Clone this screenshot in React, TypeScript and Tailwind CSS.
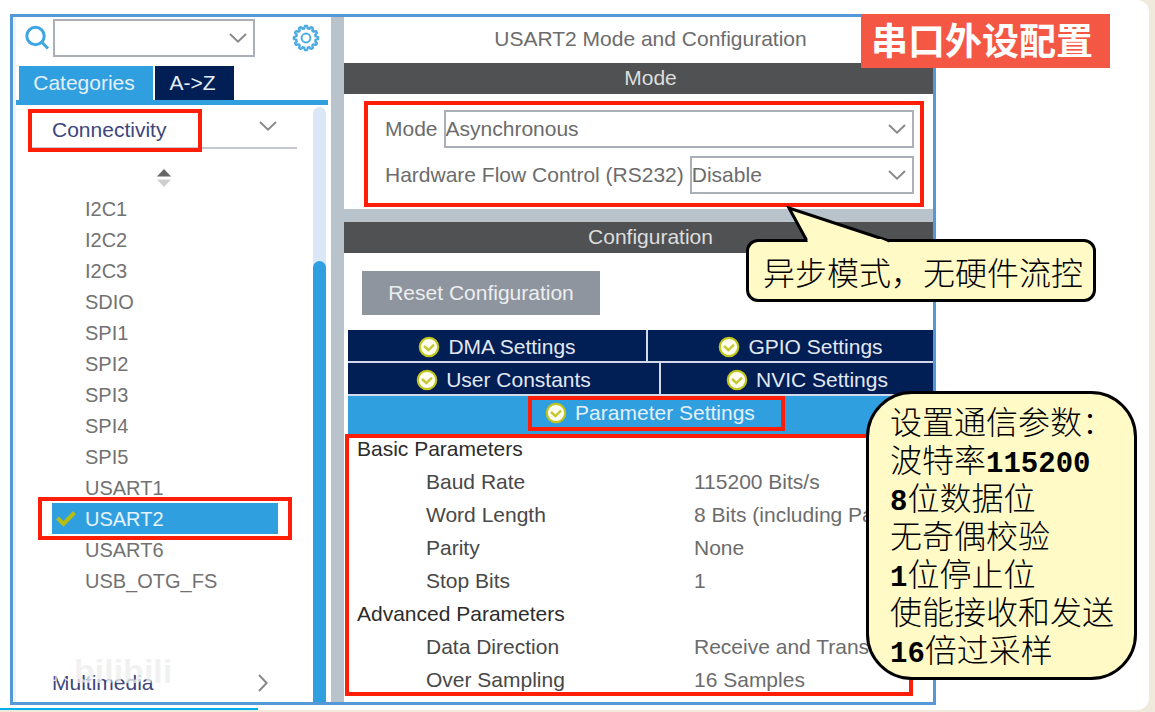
import { Fragment } from "react";

const peripherals = [
  "I2C1", "I2C2", "I2C3", "SDIO", "SPI1", "SPI2", "SPI3", "SPI4", "SPI5",
  "USART1", "USART2", "USART6", "USB_OTG_FS",
];

const groups = [
  {
    name: "Basic Parameters",
    rows: [
      ["Baud Rate", "115200 Bits/s"],
      ["Word Length", "8 Bits (including Parity)"],
      ["Parity", "None"],
      ["Stop Bits", "1"],
    ],
  },
  {
    name: "Advanced Parameters",
    rows: [
      ["Data Direction", "Receive and Transmit"],
      ["Over Sampling", "16 Samples"],
    ],
  },
];

function Chevron({ className }: { className: string }) {
  return (
    <svg viewBox="0 0 18 10" className={className} fill="none" stroke="#8a8a8a" strokeWidth="2" aria-hidden="true">
      <path d="M1 1 L9 8.6 L17 1" />
    </svg>
  );
}

function CheckBadge() {
  return (
    <svg viewBox="0 0 22 22" className="size-[22px] shrink-0" aria-hidden="true">
      <circle cx="11" cy="11" r="9.2" fill="#fffef0" stroke="#c0c61c" strokeWidth="2.2" />
      <path d="M6 10 L10.4 14 L16 8.6" fill="none" stroke="#c6c832" strokeWidth="2.4" />
    </svg>
  );
}

function Gear() {
  const teeth = 12;
  const points: string[] = [];
  for (let i = 0; i <= 240; i++) {
    const a = (i / 240) * Math.PI * 2;
    const wave = Math.max(-1, Math.min(1, 1.6 * Math.cos(teeth * a)));
    const r = 10.9 + 1.2 * wave;
    points.push(`${(14 + r * Math.sin(a)).toFixed(2)},${(14 - r * Math.cos(a)).toFixed(2)}`);
  }
  return (
    <svg viewBox="0 0 28 28" className="size-7" fill="none" stroke="#4dace4" aria-hidden="true">
      <polygon points={points.join(" ")} strokeWidth="2.4" strokeLinejoin="round" />
      <circle cx="14" cy="14" r="4.4" strokeWidth="2" />
    </svg>
  );
}

function Picker({ id, value, className }: { id: string; value: string; className: string }) {
  return (
    <div className={`relative ${className}`}>
      <select
        id={id}
        aria-label={value ? undefined : "Search"}
        className="h-[38px] w-full appearance-none border-2 border-[#abafb8] bg-white text-[#6c6c6c]"
      >
        <option>{value}</option>
      </select>
      <Chevron className="pointer-events-none absolute right-2 top-3.5 h-2.5 w-[18px]" />
    </div>
  );
}

function Tab({ label, className }: { label: string; className: string }) {
  return (
    <button className={`flex items-center justify-center gap-2 bg-[#011e55] text-[#e3e8f2] ${className}`}>
      <CheckBadge />
      {label}
    </button>
  );
}

function Sidebar() {
  return (
    <aside className="flex w-[318px] shrink-0 flex-col border-l-3 border-[#eff3fb]">
      <div className="flex items-center pt-0.5 pl-2">
        <svg viewBox="0 0 26 26" className="size-[26px]" fill="none" stroke="#3fa6e2" strokeWidth="3" aria-hidden="true">
          <circle cx="11.5" cy="11" r="8.7" />
          <path d="M17.8 17.3 L24 23.5" />
        </svg>
        <Picker id="search" value="" className="ml-[3px] w-[202px]" />
        <button aria-label="Settings" className="ml-[37px]">
          <Gear />
        </button>
      </div>
      <div className="mt-[9px] mr-[3px] flex gap-0.5 border-b-5 border-[#309fe0] pl-[3px] text-[#e3f0fa]">
        <button className="h-[34px] w-[134px] bg-[#309fe0] pr-1">Categories</button>
        <button className="h-[34px] w-[79px] bg-[#011e55] pr-1">A-&gt;Z</button>
      </div>
      <div className="flex flex-1">
        <nav className="flex flex-1 flex-col">
          <div className="relative mt-[7px] ml-4 mr-4 flex h-[37px] items-center justify-between border-b-2 border-[#c5c8d2] pl-5 pr-5 text-[#3d467d]">
            <a href="#connectivity">Connectivity</a>
            <Chevron className="mb-2 h-2.5 w-[18px]" />
            <span className="absolute -left-1 -top-[3px] h-[43px] w-[174px] border-4 border-[#ff1e07]" />
          </div>
          <svg viewBox="0 0 14 18" className="mt-5 ml-[141px] h-[18px] w-3.5" aria-hidden="true">
            <path d="M7 0 L14 7.5 H0Z" fill="#666" />
            <path d="M7 18 L14 10.5 H0Z" fill="#cfcfcf" />
          </svg>
          <ul className="mt-1.5 mr-[35px] ml-9 text-xl text-[#727272]">
            {peripherals.map((name) =>
              name === "USART2" ? (
                <li key={name} className="relative flex h-[31px] items-center bg-[#309fe0] text-[#e6f4fd]">
                  <svg viewBox="0 0 20 16" className="ml-1 h-4 w-5" fill="none" stroke="#b5bd13" strokeWidth="4" aria-hidden="true">
                    <path d="M1.5 7 L7.5 13 L18.5 1.5" />
                  </svg>
                  <a href="#USART2" className="ml-[9px]">{name}</a>
                  <span className="absolute -inset-x-3.5 -inset-y-1.5 border-4 border-[#ff1e07]" />
                </li>
              ) : (
                <li key={name} className="flex h-[31px] items-center pl-[33px]">
                  <a href={`#${name}`}>{name}</a>
                </li>
              ),
            )}
          </ul>
          <div className="relative mt-auto mb-[3px] flex h-8 items-center justify-between pl-9 pr-[41px] text-[#3d467d]">
            <a href="#multimedia">Multimedia</a>
            <Chevron className="h-2.5 w-[18px] -rotate-90" />
            <span className="absolute bottom-3 left-0 flex items-end gap-1 whitespace-nowrap text-white/80">
              <span className="text-lg">小科技</span>
              <span className="text-[34px] leading-8 font-bold text-[#eeeeee]/80">bilibili</span>
            </span>
          </div>
        </nav>
        <div className="mt-0.5 mr-[5px] flex w-[13px] flex-col rounded-t-full bg-[#d9e7f6]">
          <div className="mt-[154px] flex-1 rounded-t-full bg-[#309fe0]" />
        </div>
      </div>
    </aside>
  );
}

function MainPanel() {
  return (
    <main className="flex min-w-0 flex-1 flex-col overflow-hidden border-l-[13px] border-[#b9c3cb]">
      <h1 className="flex h-[46px] items-center justify-center pb-0.5 pl-6 text-[#6c6c6c]">USART2 Mode and Configuration</h1>
      <h2 className="flex h-[31px] items-center justify-center bg-[#505153] pb-0.5 pl-6 text-[#dedede]">Mode</h2>
      <section className="px-5 pt-[7px] pb-0.5 text-[#6c6c6c]">
        <div className="-mr-[11px] flex flex-col gap-2 border-4 border-[#ff1e07] pt-[5px] pr-1.5 pb-[9px] pl-[17px]">
          <div className="flex items-center gap-1.5">
            <label htmlFor="mode">Mode</label>
            <Picker id="mode" value="Asynchronous" className="flex-1" />
          </div>
          <div className="flex items-center gap-1.5">
            <label htmlFor="flow">Hardware Flow Control (RS232)</label>
            <Picker id="flow" value="Disable" className="flex-1" />
          </div>
        </div>
      </section>
      <div className="h-[13px] bg-[#b9c3cb]" />
      <h2 className="flex h-[31px] items-center justify-center bg-[#505153] pb-0.5 pl-6 text-[#dedede]">Configuration</h2>
      <button className="mt-[18px] ml-[18px] h-11 w-[238px] bg-[#8f959e] text-[#eceef0]">Reset Configuration</button>
      <div className="-mr-5 mt-[15px] ml-1 flex flex-col gap-0.5 bg-[#d3d9ea]">
        <div className="flex gap-0.5">
          <Tab label="DMA Settings" className="h-[31px] w-[298px] pt-0.5" />
          <Tab label="GPIO Settings" className="h-[31px] flex-1 pt-0.5" />
        </div>
        <div className="flex gap-0.5">
          <Tab label="User Constants" className="h-[31px] w-[311px] pt-0.5" />
          <Tab label="NVIC Settings" className="h-[31px] flex-1 pt-0.5" />
        </div>
        <button className="flex h-[38px] justify-center bg-[#309fe0] pl-3 text-[#e3f0fa]">
          <span className="flex h-[35px] items-center gap-2 border-4 border-[#ff1e07] pr-[26px] pb-0.5 pl-[13px]">
            <CheckBadge />
            Parameter Settings
          </span>
        </button>
      </div>
      <div className="relative -mt-0.5">
        <table className="w-full table-fixed text-left">
          <colgroup>
            <col className="w-[350px]" />
            <col />
          </colgroup>
          <tbody>
            {groups.map((group) => (
              <Fragment key={group.name}>
                <tr className="h-[33px]">
                  <th colSpan={2} className="p-0 pl-[13px] font-normal text-[#2c2c2c]">{group.name}</th>
                </tr>
                {group.rows.map(([name, value]) => (
                  <tr key={name} className="h-[33px]">
                    <th className="p-0 pl-[82px] font-normal text-[#484848]">{name}</th>
                    <td className="p-0 whitespace-nowrap text-[#6c6c6c]">{value}</td>
                  </tr>
                ))}
              </Fragment>
            ))}
          </tbody>
        </table>
        <div className="pointer-events-none absolute top-0.5 right-5 bottom-0 left-px border-4 border-[#ff1e07]" />
      </div>
    </main>
  );
}

const notes = ["设置通信参数：", "波特率115200", "8位数据位", "无奇偶校验", "1位停止位", "使能接收和发送", "16倍过采样"];

function Note({ text }: { text: string }) {
  return (
    <p className="h-[38px]">
      {text.split(/(\d+)/).map((part, i) =>
        i % 2 ? (
          <strong key={i} className="font-['Liberation_Mono',monospace] text-[29px] leading-none font-bold">{part}</strong>
        ) : (
          <span key={i}>{part}</span>
        ),
      )}
    </p>
  );
}

export default function App() {
  return (
    <div className="min-h-screen bg-[#efeadb] pr-1.5 pb-0.5 font-['Liberation_Sans','Noto_Sans_CJK_SC',sans-serif] text-[21px] leading-6">
      <div className="relative flex min-h-[710px] flex-col rounded-r-xl bg-white pt-3.5">
        <div className="mr-[213px] ml-2.5 flex min-h-[691px] border-3 border-[#5598d8]">
          <Sidebar />
          <MainPanel />
        </div>
        <div className="absolute bottom-0 left-0 h-0.5 w-[258px] bg-[#00aeec]" />
        <div className="absolute top-3.5 right-[39px] flex h-[54px] w-[249px] items-center bg-[#f45845] pt-1 pl-2.5 text-[37px] font-bold text-white">
          串口外设配置
        </div>
        <div className="absolute top-[239px] right-[53px] flex h-[63px] w-[350px] items-center rounded-xl border-3 border-black bg-[#fffac6] pt-1.5 pl-3.5 text-[32px] font-light text-black">
          异步模式，无硬件流控
          <svg viewBox="0 0 110 40" className="absolute -top-9 left-9 h-10 w-[110px]" aria-hidden="true">
            <path d="M22 35 L4 2 L104 35" fill="#fffac6" stroke="#000" strokeWidth="3" />
            <path d="M22.500 33 L96 33 L103 36 V40 H23Z" fill="#fffac6" />
          </svg>
        </div>
        <div className="absolute top-[391px] right-3 w-[271px] rounded-[46px] border-3 border-black bg-[#fffac6] pt-2.5 pb-[7px] pl-[21px] text-[32px] leading-[38px] font-light text-black">
          {notes.map((note) => (
            <Note key={note} text={note} />
          ))}
        </div>
      </div>
    </div>
  );
}
